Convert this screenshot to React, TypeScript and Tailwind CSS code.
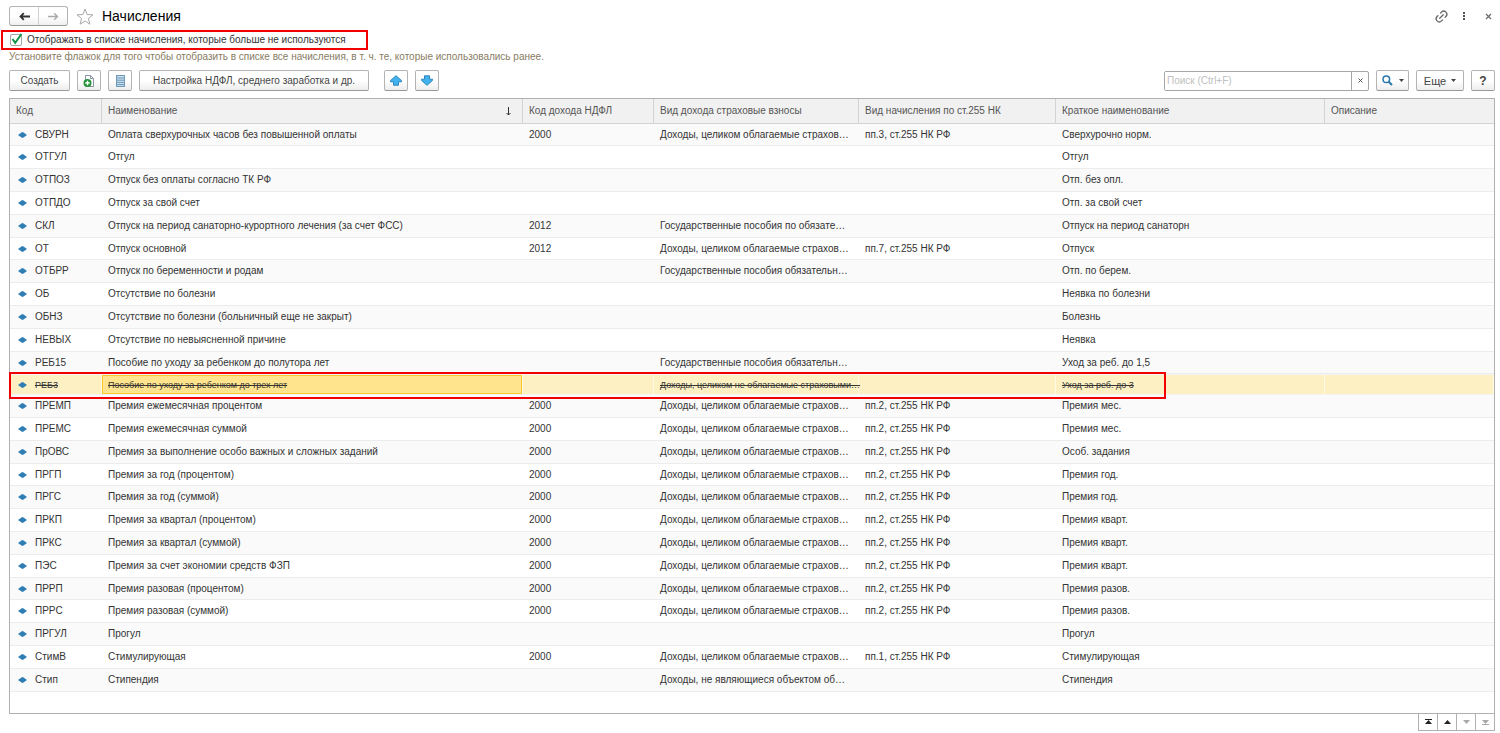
import React from "react";
import { Link2 } from "lucide-react";

type Row = {
  code: string;
  name: string;
  income?: string;
  insurance?: string;
  art255?: string;
  short: string;
  unused?: boolean;
};

const TAXED = "Доходы, целиком облагаемые страхов…";

const rows: Row[] = [
  { code: "СВУРН", name: "Оплата сверхурочных часов без повышенной оплаты", income: "2000", insurance: TAXED, art255: "пп.3, ст.255 НК РФ", short: "Сверхурочно норм." },
  { code: "ОТГУЛ", name: "Отгул", short: "Отгул" },
  { code: "ОТПОЗ", name: "Отпуск без оплаты согласно ТК РФ", short: "Отп. без опл." },
  { code: "ОТПДО", name: "Отпуск за свой счет", short: "Отп. за свой счет" },
  { code: "СКЛ", name: "Отпуск на период санаторно-курортного лечения (за счет ФСС)", income: "2012", insurance: "Государственные пособия по обязате…", short: "Отпуск на период санаторн" },
  { code: "ОТ", name: "Отпуск основной", income: "2012", insurance: TAXED, art255: "пп.7, ст.255 НК РФ", short: "Отпуск" },
  { code: "ОТБРР", name: "Отпуск по беременности и родам", insurance: "Государственные пособия обязательн…", short: "Отп. по берем." },
  { code: "ОБ", name: "Отсутствие по болезни", short: "Неявка по болезни" },
  { code: "ОБНЗ", name: "Отсутствие по болезни (больничный еще не закрыт)", short: "Болезнь" },
  { code: "НЕВЫХ", name: "Отсутствие по невыясненной причине", short: "Неявка" },
  { code: "РЕБ15", name: "Пособие по уходу за ребенком до полутора лет", insurance: "Государственные пособия обязательн…", short: "Уход за реб. до 1,5" },
  { code: "РЕБ3", name: "Пособие по уходу за ребенком до трех лет", insurance: "Доходы, целиком не облагаемые страховыми…", short: "Уход за реб. до 3", unused: true },
  { code: "ПРЕМП", name: "Премия ежемесячная процентом", income: "2000", insurance: TAXED, art255: "пп.2, ст.255 НК РФ", short: "Премия мес." },
  { code: "ПРЕМС", name: "Премия ежемесячная суммой", income: "2000", insurance: TAXED, art255: "пп.2, ст.255 НК РФ", short: "Премия мес." },
  { code: "ПрОВС", name: "Премия за выполнение особо важных и сложных заданий", income: "2000", insurance: TAXED, art255: "пп.2, ст.255 НК РФ", short: "Особ. задания" },
  { code: "ПРГП", name: "Премия за год (процентом)", income: "2000", insurance: TAXED, art255: "пп.2, ст.255 НК РФ", short: "Премия год." },
  { code: "ПРГС", name: "Премия за год (суммой)", income: "2000", insurance: TAXED, art255: "пп.2, ст.255 НК РФ", short: "Премия год." },
  { code: "ПРКП", name: "Премия за квартал (процентом)", income: "2000", insurance: TAXED, art255: "пп.2, ст.255 НК РФ", short: "Премия кварт." },
  { code: "ПРКС", name: "Премия за квартал (суммой)", income: "2000", insurance: TAXED, art255: "пп.2, ст.255 НК РФ", short: "Премия кварт." },
  { code: "ПЭС", name: "Премия за счет экономии средств ФЗП", income: "2000", insurance: TAXED, art255: "пп.2, ст.255 НК РФ", short: "Премия кварт." },
  { code: "ПРРП", name: "Премия разовая (процентом)", income: "2000", insurance: TAXED, art255: "пп.2, ст.255 НК РФ", short: "Премия разов." },
  { code: "ПРРС", name: "Премия разовая (суммой)", income: "2000", insurance: TAXED, art255: "пп.2, ст.255 НК РФ", short: "Премия разов." },
  { code: "ПРГУЛ", name: "Прогул", short: "Прогул" },
  { code: "СтимВ", name: "Стимулирующая", income: "2000", insurance: TAXED, art255: "пп.1, ст.255 НК РФ", short: "Стимулирующая" },
  { code: "Стип", name: "Стипендия", insurance: "Доходы, не являющиеся объектом об…", short: "Стипендия" },
];

const columns = [
  "Код",
  "Наименование",
  "Код дохода НДФЛ",
  "Вид дохода страховые взносы",
  "Вид начисления по ст.255 НК",
  "Краткое наименование",
  "Описание",
];

const buttonClass =
  "flex h-[21px] items-center justify-center rounded-[2px] border border-[#b4b4b4] border-b-[#999999] bg-linear-to-b from-white from-50% to-[#ededed] text-[#444444]";

function Caret() {
  return (
    <svg width="5" height="3" viewBox="0 0 5 3" aria-hidden="true">
      <path d="M0 0h5L2.500 3z" fill="#444" />
    </svg>
  );
}

function NavArrow({ back }: { back?: boolean }) {
  return (
    <svg width="11" height="9" viewBox="0 0 11 9" fill="none" stroke={back ? "#333" : "#aaa"} strokeWidth={back ? 1.8 : 1.4} aria-hidden="true">
      {back ? <path d="M11 4.500H1.500M4.800 1.200L1.500 4.500l3.300 3.300" /> : <path d="M0 4.500h9.500M6.200 1.200l3.300 3.300-3.300 3.300" />}
    </svg>
  );
}

function MoveArrow({ down }: { down?: boolean }) {
  return (
    <svg width="12" height="11" viewBox="0 0 12 11" aria-hidden="true">
      <path
        d={down ? "M3.500 .8h5v3.400h3v1.200L6 10.300.5 5.400V4.200h3z" : "M6 .7l5.500 4.900v1.200h-3v3.400h-5V6.800h-3V5.600z"}
        fill="#41b2ee"
        stroke="#2f86bb"
        strokeLinejoin="round"
      />
    </svg>
  );
}

function ScrollIcon({ down, edge }: { down?: boolean; edge?: boolean }) {
  const fill = down ? "#a9a9a9" : "#222222";
  return (
    <svg width="9" height="6" viewBox="0 0 9 6" fill={fill} aria-hidden="true">
      {down ? <path d="M1 1h7L4.500 5z" /> : <path d="M1 5h7L4.500 1z" />}
      {edge && <rect x="1" y={down ? 5 : 0} width="7" height="1" />}
    </svg>
  );
}

export default function App() {
  return (
    <main className="flex min-h-screen flex-col bg-white pr-[5px] pl-[9px] font-['Liberation_Sans',Arial,sans-serif] text-[10px] leading-[14px] text-[#333333]">
      <header className="flex h-[30px] items-center pt-[2px]">
        <div className="flex h-[20px] w-[59px] rounded-[3px] border border-[#b4b4b4] border-b-[#999999] bg-linear-to-b from-white from-50% to-[#f0f0f0]">
          <button type="button" aria-label="Назад" className="flex flex-1 items-center justify-center border-r border-[#d0d0d0]">
            <NavArrow back />
          </button>
          <button type="button" aria-label="Вперед" className="flex flex-1 items-center justify-center">
            <NavArrow />
          </button>
        </div>
        <button type="button" aria-label="В избранное" className="ml-[8px]">
          <svg width="18" height="17" viewBox="0 0 18 17" fill="none" stroke="#a8a8a8" aria-hidden="true">
            <path d="M9 1l2.100 5.500 5.900.3-4.600 3.700 1.500 5.700L9 13l-4.900 3.200 1.500-5.700L1 6.800l5.900-.3z" />
          </svg>
        </button>
        <h1 className="ml-[8px] text-[14px] leading-[18px] text-black">Начисления</h1>
        <div className="ml-auto flex items-center text-[#666666]">
          <button type="button" aria-label="Ссылка" className="-rotate-45">
            <Link2 size={15} strokeWidth={2} />
          </button>
          <button type="button" aria-label="Меню" className="ml-[14px]">
            <svg width="3" height="9" viewBox="0 0 3 9" fill="#555" aria-hidden="true">
              <rect width="2" height="2" />
              <rect y="3" width="2" height="2" />
              <rect y="6" width="2" height="2" />
            </svg>
          </button>
          <button type="button" aria-label="Закрыть" className="mr-[3px] ml-[19px]">
            <svg width="7" height="7" viewBox="0 0 7 7" stroke="#666" strokeWidth="1.100" aria-hidden="true">
              <path d="M1 1l5 5M6 1L1 6" />
            </svg>
          </button>
        </div>
      </header>

      <label className="-ml-[8px] flex h-[20px] w-[367px] items-center border-2 border-[#f20000] pl-[7px]">
        <span className="grid">
          <input type="checkbox" defaultChecked className="peer col-start-1 row-start-1 size-[12px] appearance-none rounded-[2px] border border-[#a6a6a6] bg-white" />
          <svg className="pointer-events-none invisible col-start-1 row-start-1 peer-checked:visible" width="12" height="12" viewBox="0 0 12 12" fill="none" stroke="#0e9648" strokeWidth="2" overflow="visible" aria-hidden="true">
            <path d="M2.500 5l2.700 3.800L11.500 0" />
          </svg>
        </span>
        <span className="ml-[5px] whitespace-nowrap">Отображать в списке начисления, которые больше не используются</span>
      </label>

      <p className="text-[#877c62]">
        Установите флажок для того чтобы отобразить в списке все начисления, в т. ч. те, которые использовались ранее.
      </p>

      <div className="mt-[6px] flex items-center gap-[7px]">
        <button type="button" className={`${buttonClass} w-[61px]`}>Создать</button>
        <button type="button" aria-label="Создать копированием" className={`${buttonClass} w-[24px]`}>
          <svg width="12" height="14" viewBox="0 0 12 14" aria-hidden="true">
            <path d="M2.500 1.500h5l3 3v8h-8z" fill="#fff" stroke="#8795a1" />
            <path d="M7.500 1.500v3h3" fill="none" stroke="#8795a1" />
            <circle cx="4.500" cy="9" r="4" fill="#27943a" />
            <path d="M4.500 6.800v4.400M2.300 9h4.400" stroke="#fff" strokeWidth="1.400" />
          </svg>
        </button>
        <button type="button" aria-label="Список" className={`${buttonClass} w-[24px]`}>
          <svg width="9" height="12" viewBox="0 0 9 12" aria-hidden="true">
            <rect x=".5" y=".5" width="8" height="11" fill="#c7ddeb" stroke="#6f9aba" />
            <path d="M1 3h7M1 5.200h7M1 7.400h7M1 9.600h7" stroke="#6f9aba" />
          </svg>
        </button>
        <button type="button" className={`${buttonClass} w-[230px]`}>Настройка НДФЛ, среднего заработка и др.</button>
        <button type="button" aria-label="Переместить вверх" className={`${buttonClass} ml-[8px] w-[24px]`}>
          <MoveArrow />
        </button>
        <button type="button" aria-label="Переместить вниз" className={`${buttonClass} w-[24px]`}>
          <MoveArrow down />
        </button>

        <div className="ml-auto flex h-[20px] w-[205px] rounded-[2px] border border-[#a6a6a6]">
          <input type="text" aria-label="Поиск" placeholder="Поиск (Ctrl+F)" className="min-w-0 flex-1 bg-white px-[2px] outline-none placeholder:text-[#c0c0c0]" />
          <button type="button" aria-label="Очистить" className="flex w-[17px] items-center justify-center border-l border-[#a6a6a6]">
            <svg width="5" height="5" viewBox="0 0 5 5" stroke="#555" aria-hidden="true">
              <path d="M.5.500l4 4M4.500.500l-4 4" />
            </svg>
          </button>
        </div>
        <button type="button" aria-label="Найти" className={`${buttonClass} w-[33px] gap-[6px]`}>
          <svg width="11" height="11" viewBox="0 0 11 11" fill="none" stroke="#2878ac" aria-hidden="true">
            <circle cx="4.300" cy="4.300" r="3.300" strokeWidth="1.500" />
            <path d="M6.700 6.700L10 10" strokeWidth="2" />
          </svg>
          <Caret />
        </button>
        <button type="button" className={`${buttonClass} w-[48px] gap-[5px] text-[11px]`}>
          Еще
          <Caret />
        </button>
        <button type="button" aria-label="Справка" className={`${buttonClass} w-[24px] text-[12px] font-bold text-[#222222]`}>?</button>
      </div>

      <section className="mt-[7px] min-h-[616px] border border-[#b0b0b0]">
        <table className="w-full table-fixed border-separate border-spacing-0 text-left">
          <colgroup>
            <col className="w-[92px]" />
            <col className="w-[421px]" />
            <col className="w-[131px]" />
            <col className="w-[205px]" />
            <col className="w-[197px]" />
            <col className="w-[269px]" />
            <col />
          </colgroup>
          <thead>
            <tr className="h-[25px] bg-[#f1f1f1] text-[#555555]">
              {columns.map((title) => (
                <th key={title} className="border-r border-b border-[#d4d4d4] p-0 px-[6px] font-normal whitespace-nowrap last:border-r-0">
                  <span className="flex items-center justify-between">
                    {title}
                    {title === "Наименование" && (
                      <svg className="mr-[4px]" width="7" height="9" viewBox="0 0 7 9" fill="none" stroke="#333" aria-label="По возрастанию">
                        <path d="M3.500 0v8M1.500 6L3.500 8l2-2" />
                      </svg>
                    )}
                  </span>
                </th>
              ))}
            </tr>
          </thead>
          <tbody>
            {rows.map((row) => {
              const rowClass = row.unused
                ? "relative h-[21px] text-[9px] text-[#333333] line-through *:border-y *:border-y-[#f4f4f4] *:border-r *:border-r-[#fff9e6] *:bg-[#fdf1c4]"
                : "h-[23px] odd:bg-[#fafafa] nth-[5n+1]:h-[22px] *:border-b *:border-[#ececec]";
              return (
                <tr key={row.code} className={rowClass}>
                  <td className="p-0 pl-[8px]">
                    <span className="flex items-center gap-[8px]">
                      <svg width="9" height="6" viewBox="0 0 9 6" aria-hidden="true">
                        <path d="M0 3L3.500.5 4.500 0l1 .5L9 3 5.500 5.500l-1 .5-1-.5z" fill="#2f7db3" />
                      </svg>
                      {row.code}
                    </span>
                    {row.unused && <span className="pointer-events-none absolute -top-[2px] -left-px h-[27px] w-[1157px] border-2 border-[#f20000]" />}
                  </td>
                  <td className={row.unused ? "p-0" : "p-0 px-[6px]"}>
                    {row.unused ? (
                      <span className="flex h-[19px] items-center border border-[#f8c92c] bg-[#ffe48d] px-[5px]">{row.name}</span>
                    ) : (
                      row.name
                    )}
                  </td>
                  <td className="p-0 px-[6px]">{row.income}</td>
                  <td className="p-0 pl-[6px] whitespace-nowrap">{row.insurance}</td>
                  <td className="p-0 px-[6px]">{row.art255}</td>
                  <td className="p-0 px-[6px]">{row.short}</td>
                  <td className="p-0" />
                </tr>
              );
            })}
          </tbody>
        </table>
      </section>

      <nav aria-label="Прокрутка списка" className="flex h-[17px] w-[77px] divide-x divide-[#b0b0b0] self-end border border-t-0 border-[#b0b0b0]">
        <button type="button" aria-label="В начало" className="flex flex-1 items-center justify-center"><ScrollIcon edge /></button>
        <button type="button" aria-label="Вверх" className="flex flex-1 items-center justify-center"><ScrollIcon /></button>
        <button type="button" aria-label="Вниз" className="flex flex-1 items-center justify-center"><ScrollIcon down /></button>
        <button type="button" aria-label="В конец" className="flex flex-1 items-center justify-center"><ScrollIcon down edge /></button>
      </nav>
    </main>
  );
}
